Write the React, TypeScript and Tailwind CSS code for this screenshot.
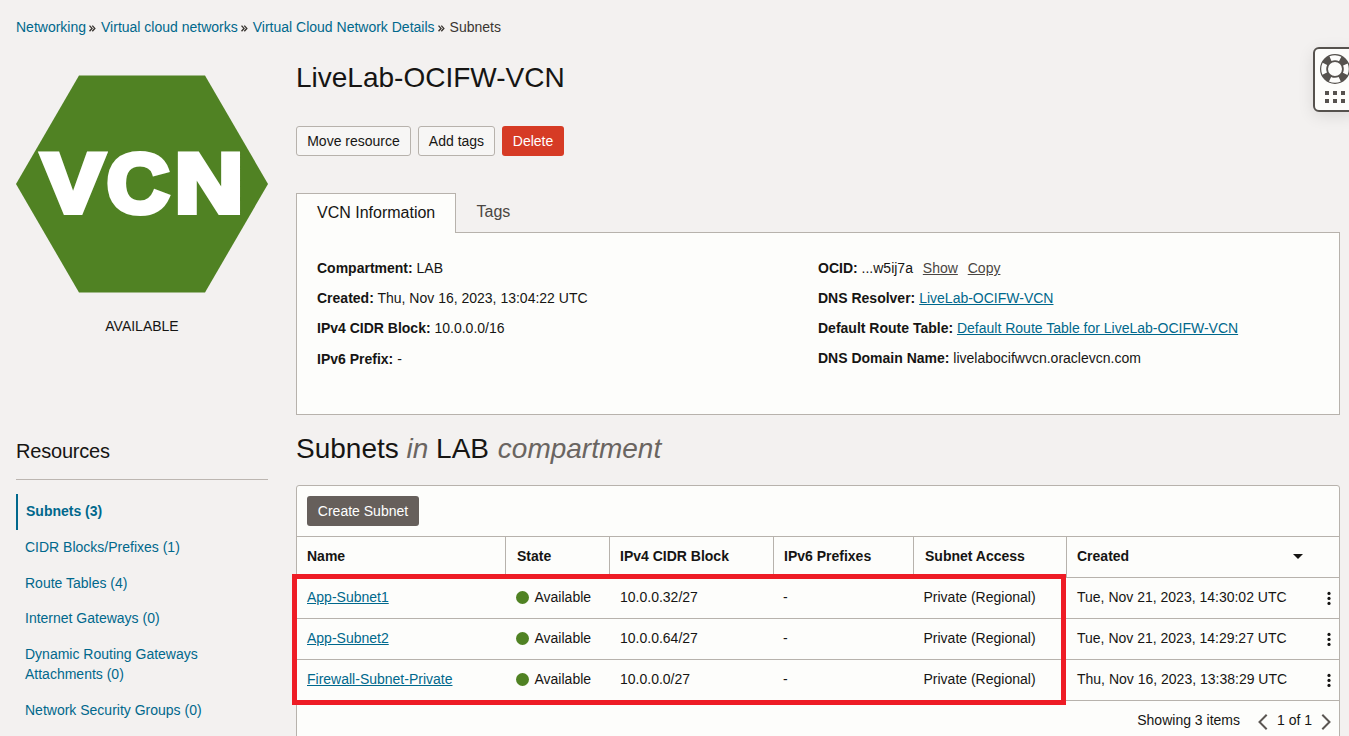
import React from "react";

const link = "text-[#00688c]";

const crumbs = ["Networking", "Virtual cloud networks", "Virtual Cloud Network Details"];

const resources = [
  "CIDR Blocks/Prefixes (1)",
  "Route Tables (4)",
  "Internet Gateways (0)",
  "Dynamic Routing Gateways Attachments (0)",
  "Network Security Groups (0)",
];

const headers = [
  { label: "State", pad: "pl-[11px]" },
  { label: "IPv4 CIDR Block", pad: "pl-[10px]" },
  { label: "IPv6 Prefixes", pad: "pl-[10px]" },
  { label: "Subnet Access", pad: "pl-[11px]" },
];

const subnets = [
  { name: "App-Subnet1", cidr: "10.0.0.32/27", created: "Tue, Nov 21, 2023, 14:30:02 UTC" },
  { name: "App-Subnet2", cidr: "10.0.0.64/27", created: "Tue, Nov 21, 2023, 14:29:27 UTC" },
  { name: "Firewall-Subnet-Private", cidr: "10.0.0.0/27", created: "Thu, Nov 16, 2023, 13:38:29 UTC" },
];

const columns = "grid grid-cols-[208px_104px_164px_140px_153px_273px]";

function Guillemet() {
  return (
    <svg width="7" height="7" viewBox="0 0 7 7" className="mt-[2px] ml-[3px] mr-[5px]" fill="none" stroke="#3a3632" strokeWidth="1.4">
      <path d="M0.5 0.6 L3 3.4 L0.5 6.2 M3.3 0.6 L5.8 3.4 L3.3 6.2" />
    </svg>
  );
}

function Hexagon() {
  return (
    <svg width="252" height="218" viewBox="0 0 252 218" className="block">
      <polygon points="63,0.5 189,0.5 252,109 189,217.5 63,217.5 0,109" fill="#508223" />
      <g
        fontFamily="'Liberation Sans', Arial, sans-serif"
        fontWeight="700"
        fontSize="83"
        fill="#fff"
        stroke="#fff"
        strokeWidth="6"
        strokeLinejoin="miter"
      >
        <text x="26" y="137" textLength="62" lengthAdjust="spacingAndGlyphs">V</text>
        <text x="91" y="137" textLength="62" lengthAdjust="spacingAndGlyphs">C</text>
        <text x="159" y="137" textLength="68" lengthAdjust="spacingAndGlyphs">N</text>
      </g>
    </svg>
  );
}

function Support() {
  return (
    <div className="absolute left-[1313px] top-[47px] h-[65px] w-[44px] rounded-[6px] border-2 border-[#56524e] bg-[#fdfdfb] shadow-[0_4px_16px_rgba(0,0,0,0.1)]">
      <svg width="42" height="61" viewBox="0 0 42 61">
        <circle cx="20" cy="20" r="11" fill="none" stroke="#56524e" strokeWidth="8" />
        <circle
          cx="20"
          cy="20"
          r="11.3"
          fill="none"
          stroke="#fdfdfb"
          strokeWidth="5"
          strokeDasharray="10 7.75"
          strokeDashoffset="5"
        />
        <g fill="#56524e">
          <rect x="10" y="42" width="4" height="4" />
          <rect x="18" y="42" width="4" height="4" />
          <rect x="26" y="42" width="4" height="4" />
          <rect x="10" y="50" width="4" height="4" />
          <rect x="18" y="50" width="4" height="4" />
          <rect x="26" y="50" width="4" height="4" />
        </g>
      </svg>
    </div>
  );
}

function Field({ label, children }: { label: string; children: React.ReactNode }) {
  return (
    <div className="h-[30px] leading-[30px]">
      <b>{label}</b> {children}
    </div>
  );
}

export default function App() {
  return (
    <div className="relative h-[736px] w-[1349px] overflow-hidden bg-[#f3f1f0] font-['Liberation_Sans',Arial,sans-serif] text-[14px] leading-[20px] text-[#161513]">
      <nav className="flex h-[37px] items-center pl-4 pt-[17px]">
        {crumbs.map((c) => (
          <React.Fragment key={c}>
            <a className={link}>{c}</a>
            <Guillemet />
          </React.Fragment>
        ))}
        <span className="text-[#3a3632]">Subnets</span>
      </nav>

      <div className="flex pl-4">
        <aside className="w-[252px] shrink-0 pt-[38px]">
          <Hexagon />
          <div className="mt-[23px] text-center">AVAILABLE</div>
          <h3 className="mt-[103px] border-b border-[#bcb6b1] pb-[16px] text-[20px] leading-[24px] tracking-[-0.2px]">Resources</h3>
          <ul className={`mt-[14px] leading-[19.8px] ${link}`}>
            <li className="border-l-2 border-[#00688c] py-2 pl-2 font-bold">Subnets (3)</li>
            {resources.map((r) => (
              <li key={r} className="w-[210px] py-2 pl-[9px]">{r}</li>
            ))}
          </ul>
        </aside>

        <main className="ml-7 w-[1044px] shrink-0 pt-[23px]">
          <h1 className="text-[28px] leading-[36px]">LiveLab-OCIFW-VCN</h1>
          <div className="mt-[30px] flex gap-[7px]">
            <button className="h-[30px] w-[115px] rounded-[3px] border border-[#b7b2ac] bg-[#f7f6f5]">Move resource</button>
            <button className="h-[30px] w-[77px] rounded-[3px] border border-[#b7b2ac] bg-[#f7f6f5]">Add tags</button>
            <button className="h-[30px] w-[62px] rounded-[3px] bg-[#d63b25] text-white">Delete</button>
          </div>

          <div className="mt-[37px] flex text-[16px]">
            <div className="z-10 -mb-px h-[40px] w-[160px] border border-b-0 border-[#b7b2ac] bg-[#fdfdfb] pl-5 leading-[37px]">
              VCN Information
            </div>
            <div className="pl-[20.5px] leading-[37px] text-[#4a4642]">Tags</div>
          </div>
          <section className="flex h-[183px] border border-[#b7b2ac] bg-[#fdfdfb] pl-5 pt-5">
            <div className="w-[501px]">
              <Field label="Compartment:">LAB</Field>
              <Field label="Created:">Thu, Nov 16, 2023, 13:04:22 UTC</Field>
              <Field label="IPv4 CIDR Block:">10.0.0.0/16</Field>
              <div className="pt-px">
                <Field label="IPv6 Prefix:">-</Field>
              </div>
            </div>
            <div>
              <Field label="OCID:">
                ...w5ij7a <a className="ml-[6px] mr-[6px] text-[#4a4642] underline">Show</a> <a className="text-[#4a4642] underline">Copy</a>
              </Field>
              <Field label="DNS Resolver:"><a className={`${link} underline`}>LiveLab-OCIFW-VCN</a></Field>
              <Field label="Default Route Table:"><a className={`${link} underline`}>Default Route Table for LiveLab-OCIFW-VCN</a></Field>
              <Field label="DNS Domain Name:">livelabocifwvcn.oraclevcn.com</Field>
            </div>
          </section>

          <h2 className="mt-[16px] text-[28px] leading-[36px]">
            Subnets <i className="text-[#6a6561]">in</i> LAB <i className="ml-px text-[#6a6561]">compartment</i>
          </h2>

          <section className="relative mt-[18px] h-[300px] rounded-[3px] border border-[#b7b2ac] bg-[#fdfdfb]">
            <div className="h-[50px] pl-[10px] pt-[10px]">
              <button className="h-[30px] w-[112px] rounded-[3px] bg-[#665f5b] text-white">Create Subnet</button>
            </div>
            <div className={`${columns} h-[42px] border-y border-[#b7b2ac] font-bold leading-[39px]`}>
              <div className="pl-[10px]">Name</div>
              {headers.map((h) => (
                <div key={h.label} className={`border-l border-[#b7b2ac] ${h.pad}`}>{h.label}</div>
              ))}
              <div className="flex justify-between border-l border-[#b7b2ac] pl-[10px] pr-[36px]">
                <span>Created</span>
                <svg width="10" height="5" viewBox="0 0 10 5" className="mt-[17px]"><path d="M0 0h10L5 5z" fill="#161513" /></svg>
              </div>
            </div>
            {subnets.map((s) => (
              <div key={s.name} className={`${columns} h-[41px] border-b border-[#b7b2ac] leading-[39px]`}>
                <div className="pl-[10px]"><a className={`${link} underline`}>{s.name}</a></div>
                <div className="flex pl-[10.5px]">
                  <span className="mr-[6px] mt-[13px] size-[13px] rounded-full bg-[#508223]" />
                  <span>Available</span>
                </div>
                <div className="pl-[11px]">{s.cidr}</div>
                <div className="pl-[10px]">-</div>
                <div className="pl-[10.5px]">Private (Regional)</div>
                <div className="flex justify-between pl-[11px] pr-[8.5px]">
                  <span>{s.created}</span>
                  <svg width="4" height="14" viewBox="0 0 4 14" className="mt-[13px]" fill="#161513">
                    <circle cx="2" cy="2.4" r="1.6" />
                    <circle cx="2" cy="7.4" r="1.6" />
                    <circle cx="2" cy="12.4" r="1.6" />
                  </svg>
                </div>
              </div>
            ))}
            <div className="flex h-[38px] items-center justify-end pr-[8px]">
              <span>Showing 3 items</span>
              <svg width="10" height="16" viewBox="0 0 10 16" className="ml-[18px] mr-[9px] mt-[3px]" fill="none" stroke="#5b5652" strokeWidth="2">
                <path d="M8.7 0.7 L1.5 8 L8.7 15.3" />
              </svg>
              <span>1 of 1</span>
              <svg width="10" height="16" viewBox="0 0 10 16" className="ml-[9px] mt-[3px]" fill="none" stroke="#5b5652" strokeWidth="2">
                <path d="M1.3 0.7 L8.5 8 L1.3 15.3" />
              </svg>
            </div>
            <div className="absolute -left-[5px] top-[88px] h-[131px] w-[774px] border-[5px] border-[#ee1c25]" />
          </section>
        </main>
      </div>
      <Support />
    </div>
  );
}
